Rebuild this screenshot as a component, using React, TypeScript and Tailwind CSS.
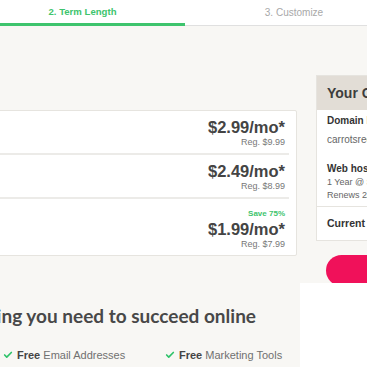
import { Check } from 'lucide-react'

const plans = [
  { price: '$2.99/mo*', reg: 'Reg. $9.99' },
  { price: '$2.49/mo*', reg: 'Reg. $8.99' },
  { price: '$1.99/mo*', reg: 'Reg. $7.99', save: 'Save 75%' },
]

export default function App() {
  return (
    <div className="w-[367px] h-[367px] overflow-hidden bg-white font-['Liberation_Sans',Arial,sans-serif] text-[#444]">
      {/* Steps */}
      <div className="h-[26px] bg-white border-b border-[#e0e0e0] flex whitespace-nowrap">
        <div className="relative shrink-0 w-[205px] -ml-[20px] flex items-center justify-center text-[9.6px] font-bold text-[#3ec46d]">
          2. Term Length
          <div className="absolute left-0 right-0 -bottom-px h-[3px] bg-[#3ec46d]" />
        </div>
        <div className="shrink-0 w-[218px] flex items-center justify-center text-[10px] text-[#a8a8a8]">
          3. Customize
        </div>
      </div>

      {/* Plans + order summary */}
      <div className="h-[257px] bg-[#f8f7f4] flex items-start overflow-hidden">
        <div className="shrink-0 w-[317px] -ml-[20px] mt-[84px] bg-white border border-[#e6e4df] rounded-[2px] px-[7px]">
          {plans.map((p, i) => (
            <div
              key={p.price}
              className={`flex flex-col items-end pr-[4px] ${i < 2 ? 'border-b-2 border-[#ecebe8] pt-[6px] pb-[5px]' : 'pt-[10px] pb-[5px]'}`}
            >
              {p.save && <div className="text-[8px] leading-[10px] font-bold text-[#3ec46d]">{p.save}</div>}
              <div className="text-[16.5px] leading-[20px] font-bold">{p.price}</div>
              <div className="text-[9px] leading-[11px] text-[#777]">{p.reg}</div>
            </div>
          ))}
        </div>

        <div className="shrink-0 w-[220px] ml-[19px] mt-[49px] flex flex-col">
          <div className="border border-[#e6e4df] bg-white">
            <div className="h-[34px] bg-[#e2ddd6] px-[10px] flex items-center text-[14px] font-bold text-[#3d3d3d] whitespace-nowrap">
              Your Order Summary
            </div>
            <div className="px-[10px] pt-[4px] pb-[4px] border-b border-[#e6e4df] whitespace-nowrap">
              <div className="text-[10px] leading-[14px] font-bold text-[#333]">Domain Name</div>
              <div className="mt-[5px] text-[10px] leading-[14px] text-[#666]">carrotsrecipes.com</div>
              <div className="mt-[15px] text-[10px] leading-[14px] font-bold text-[#333]">Web hosting</div>
              <div className="text-[9px] leading-[13px] text-[#666]">1 Year @ $1.99/mo</div>
              <div className="text-[9px] leading-[13px] text-[#666]">Renews 2/2025</div>
            </div>
            <div className="h-[33px] px-[10px] flex items-center text-[10.5px] font-bold text-[#333] whitespace-nowrap">
              Current Total
            </div>
          </div>
          <div className="mt-[14px] ml-[10px] h-[31px] rounded-full bg-[#f0115a]" />
        </div>
      </div>

      {/* Features */}
      <div className="h-[84px] flex">
        <div className="w-[300px] bg-[#f8f7f4] overflow-hidden">
          <div className="flex justify-end pr-[44px] pt-[21px] whitespace-nowrap">
            <h2 className="font-['Lato',sans-serif] text-[19px] leading-[24px] font-bold text-[#484848]">
              Everything you need to succeed online
            </h2>
          </div>
          <div className="flex mt-[20px] text-[11px] leading-[14px] text-[#707070] whitespace-nowrap">
            <div className="w-[162px] ml-[3px] flex items-center gap-[4px]">
              <Check className="w-[10px] h-[10px] text-[#2fc36a]" strokeWidth={4} />
              <span><b className="text-[#444]">Free</b> Email Addresses</span>
            </div>
            <div className="flex items-center gap-[4px]">
              <Check className="w-[10px] h-[10px] text-[#2fc36a]" strokeWidth={4} />
              <span><b className="text-[#444]">Free</b> Marketing Tools</span>
            </div>
          </div>
        </div>
        <div className="flex-1 bg-white" />
      </div>
    </div>
  )
}
